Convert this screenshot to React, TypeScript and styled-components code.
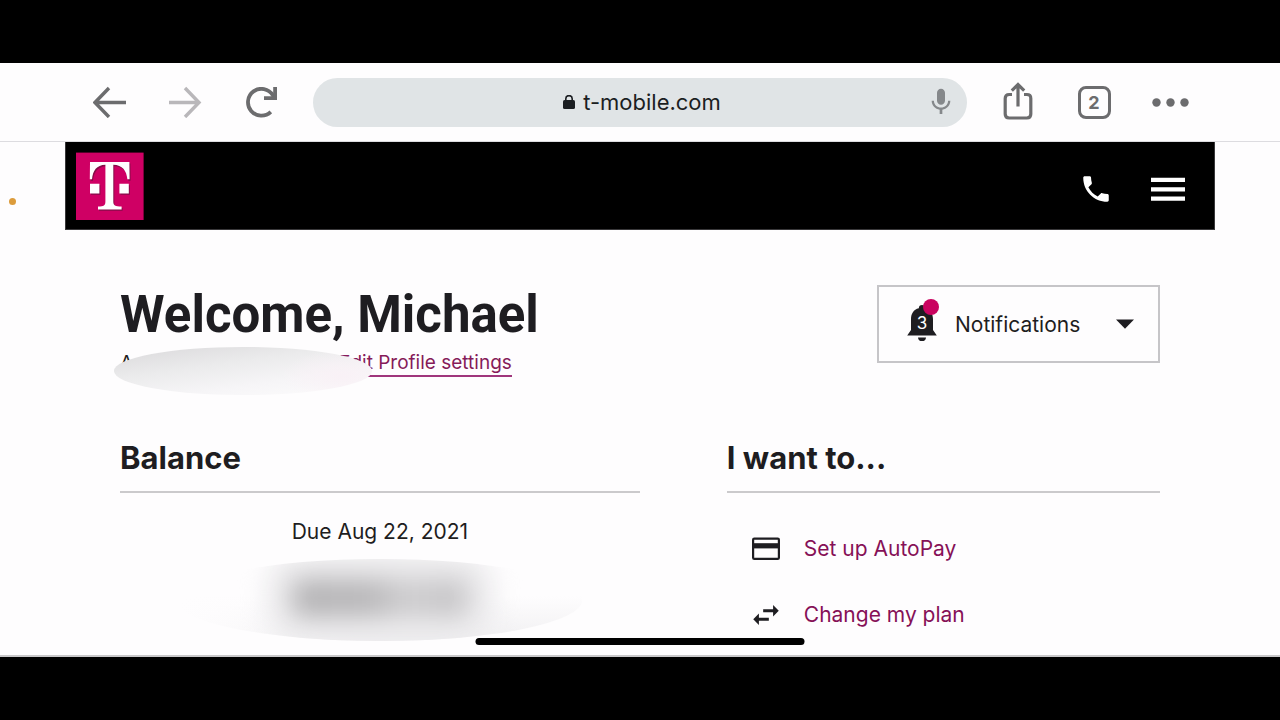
import React from "react";
import styled, { createGlobalStyle } from "styled-components";
import { MdMic, MdSwapHoriz } from "react-icons/md";

const GlobalStyle = createGlobalStyle`
  *, *::before, *::after { box-sizing: border-box; }
  body {
    margin: 0;
    background: #000;
    color: #1e1d21;
    font-family: Inter, "Liberation Sans", sans-serif;
    font-size: 21px;
  }
  h1, h2, p, ul { margin: 0; padding: 0; }
  button { font: inherit; color: inherit; cursor: pointer; }
  svg { display: block; }
`;

const Device = styled.div`
  min-height: 100vh;
  padding: 63px 0;
  display: flex;
  flex-direction: column;
`;

const Screen = styled.div`
  position: relative;
  flex: 1;
  background: #fefdfe;
  border-bottom: 2px solid #c9c8ca;
`;

const Toolbar = styled.nav`
  display: flex;
  align-items: center;
  height: 79px;
  padding: 0 72px;
  border-bottom: 1px solid #dddce0;
`;

const ToolButton = styled.button<{ $muted?: boolean }>`
  display: flex;
  align-items: center;
  justify-content: center;
  width: 76px;
  height: 48px;
  padding: 0;
  border: 0;
  background: none;
  color: ${(p) => (p.$muted ? "#b9b7ba" : "#6c6c6e")};
`;

const TabCount = styled.span`
  display: flex;
  align-items: center;
  justify-content: center;
  width: 33px;
  height: 33px;
  border: 3px solid currentColor;
  border-radius: 8px;
  font-size: 18px;
  font-weight: 700;
`;

const AddressBar = styled.div`
  flex: 1;
  display: grid;
  grid-template-columns: 1fr auto 1fr;
  align-items: center;
  height: 49px;
  margin: 0 13px;
  padding: 0 10px;
  border-radius: 25px;
  background: #e0e4e6;
`;

const Address = styled.button`
  grid-column: 2;
  display: flex;
  align-items: center;
  gap: 8px;
  padding: 0 0 0 4px;
  border: 0;
  background: none;
  color: #1b1e22;
  font-size: 22px;
  line-height: 28px;
`;

const MicButton = styled.button`
  justify-self: end;
  padding: 0;
  border: 0;
  background: none;
  color: #85888b;
`;

const SiteHeader = styled.header`
  display: flex;
  align-items: center;
  justify-content: space-between;
  height: 88px;
  margin: 0 65px;
  padding: 0 29px 0 10px;
  border: 1px solid #39383a;
  border-top: 0;
  background: #000;
`;

const HeaderActions = styled.div`
  display: flex;
  align-items: center;
  gap: 38px;
  padding-top: 6px;
`;

const HeaderButton = styled.button`
  padding: 0;
  border: 0;
  background: none;
  color: #fff;
`;

const Main = styled.main`
  padding: 55px 120px 14px;
`;

const Intro = styled.section`
  display: flex;
  align-items: flex-start;
  justify-content: space-between;
`;

const Title = styled.h1`
  font-family: Roboto, "Liberation Sans", sans-serif;
  font-size: 51px;
  line-height: 60px;
  font-weight: 700;
`;

const ProfileRow = styled.div`
  position: relative;
  display: flex;
  margin-top: 6px;
  font-size: 19px;
  line-height: 24px;
`;

const AccountLabel = styled.span`
  width: 219px;
`;

const ProfileLink = styled.a`
  border-bottom: 2px solid #a0367c;
  color: #861b59;
  text-decoration: none;
`;

const AccountMask = styled.div`
  position: absolute;
  left: -6px;
  top: -4px;
  width: 258px;
  height: 48px;
  border-radius: 50%;
  background:
    radial-gradient(ellipse 60px 26px at 88% 60%, #f9f1f6 0%, #f9f1f600 100%),
    linear-gradient(172deg, #dddcde 8%, #ebebec 38%, #f6f5f7 68%, #fcfbfc 95%);
`;

const Notifications = styled.button`
  display: flex;
  align-items: center;
  width: 283px;
  height: 78px;
  padding: 0 24px 0 28px;
  border: 2px solid #c6c5c8;
  background: #fefdfe;
`;

const NotificationsLabel = styled.span`
  flex: 1;
  margin-left: 14px;
  text-align: left;
`;

const BellIcon = styled.span`
  position: relative;
  width: 34px;
  height: 50px;
`;

const BellCount = styled.span`
  position: absolute;
  top: 14px;
  left: 0;
  width: 30px;
  color: #fff;
  font-size: 17px;
  line-height: 20px;
  text-align: center;
`;

const BellDot = styled.span`
  position: absolute;
  top: 0;
  left: 16px;
  width: 16px;
  height: 16px;
  border-radius: 50%;
  background: #c9035f;
`;

const Columns = styled.div`
  display: grid;
  grid-template-columns: 6fr 5fr;
  gap: 87px;
  margin-top: 61px;
`;

const SectionTitle = styled.h2`
  padding-bottom: 13px;
  border-bottom: 2px solid #cbcacc;
  font-size: 31px;
  line-height: 40px;
  font-weight: 700;
`;

const DueDate = styled.p`
  margin-top: 25px;
  line-height: 28px;
  text-align: center;
`;

const AmountMask = styled.div`
  display: flex;
  align-items: flex-start;
  justify-content: center;
  width: 404px;
  height: 82px;
  margin: 13px auto 0;
  padding-top: 20px;
  overflow: hidden;
  border-radius: 50%;
  background:
    linear-gradient(90deg, #fefdfe 0%, #fefdfe00 45%),
    linear-gradient(180deg, #fefdfe 45%, #f1f0f2 100%);
`;

const AmountBlur = styled.div`
  width: 176px;
  height: 38px;
  border-radius: 12px;
  background: linear-gradient(90deg, #b6b5b7 0%, #b9b8ba 45%, #cfced0 64%, #c6c5c7 100%);
  box-shadow: 0 0 0 26px #ebeaec;
  filter: blur(12px);
`;

const ActionList = styled.ul`
  display: flex;
  flex-direction: column;
  gap: 32px;
  padding: 39px 0 0 22px;
  list-style: none;
`;

const ActionLink = styled.a`
  display: flex;
  align-items: center;
  gap: 21px;
  color: #861157;
  line-height: 34px;
  text-decoration: none;

  svg { color: #1e1d21; }
`;

const HomeIndicator = styled.div`
  position: absolute;
  left: 50%;
  bottom: 10px;
  width: 329px;
  height: 7px;
  border-radius: 4px;
  background: #000;
  transform: translateX(-50%);
`;

const RecordingDot = styled.div`
  position: absolute;
  left: 9px;
  top: 135px;
  width: 7px;
  height: 7px;
  border-radius: 50%;
  background: #dc9c3c;
`;

const ArrowIcon = ({ forward = false }: { forward?: boolean }) => (
  <svg width="34" height="32" viewBox="0 0 34 32" fill="none" stroke="currentColor" strokeWidth="3.4" aria-hidden="true">
    {forward ? <path d="M0 16.5H30M16 2L30 16.5L16 31" /> : <path d="M33 16.5H3M16 2L2 16.5L16 31" />}
  </svg>
);

const ReloadIcon = () => (
  <svg width="33" height="31" viewBox="0 0 33 31" fill="none" stroke="currentColor" strokeWidth="3.8" aria-hidden="true">
    <path d="M24.8 24.8A13.4 13.4 0 1 1 26.8 8.2L29 11" />
    <path d="M29.1 0V11.2H18" />
  </svg>
);

const LockIcon = () => (
  <svg width="12" height="15" viewBox="0 0 12 15" aria-hidden="true">
    <rect x="0" y="5" width="12" height="9" rx="1.6" fill="currentColor" />
    <path d="M2.8 7V3.8A3.2 3.2 0 0 1 9.2 3.8V7" fill="none" stroke="currentColor" strokeWidth="1.6" />
  </svg>
);

const ShareIcon = () => (
  <svg width="30" height="40" viewBox="0 0 30 40" fill="none" stroke="currentColor" strokeWidth="3.2" aria-hidden="true">
    <path d="M9 12.5H6.2C3.4 12.5 2.2 13.8 2.2 16.5V32C2.2 34.7 3.4 36 6.2 36H23.8C26.6 36 27.8 34.7 27.8 32V16.5C27.8 13.8 26.6 12.5 23.8 12.5H21" />
    <path d="M15 24.5V3M8.8 8.6L15 2.6L21.2 8.6" />
  </svg>
);

const MoreIcon = () => (
  <svg width="37" height="9" viewBox="0 0 37 9" fill="currentColor" aria-hidden="true">
    <circle cx="4.5" cy="4.5" r="4.2" />
    <circle cx="18.5" cy="4.5" r="4.2" />
    <circle cx="32.5" cy="4.5" r="4.2" />
  </svg>
);

const PhoneIcon = () => (
  <svg width="34" height="34" viewBox="0 0 24 24" fill="currentColor" aria-hidden="true">
    <path d="M6.62 10.79c1.44 2.83 3.76 5.14 6.59 6.59l2.2-2.2c.27-.27.67-.36 1.02-.24 1.12.37 2.33.57 3.57.57.55 0 1 .45 1 1V20c0 .55-.45 1-1 1-9.39 0-17-7.61-17-17 0-.55.45-1 1-1h3.5c.55 0 1 .45 1 1 0 1.25.2 2.45.57 3.57.11.35.03.74-.25 1.02l-2.2 2.2z" />
  </svg>
);

const MenuIcon = () => (
  <svg width="34" height="24" viewBox="0 0 34 24" fill="currentColor" aria-hidden="true">
    <path d="M0 0.8H34V5H0ZM0 10.2H34V14.4H0ZM0 19.6H34V23.8H0Z" />
  </svg>
);

const CardIcon = () => (
  <svg width="34" height="34" viewBox="0 0 34 34" aria-hidden="true">
    <rect x="4.1" y="6.6" width="25.8" height="20.3" rx="1.2" fill="none" stroke="currentColor" strokeWidth="2.2" />
    <rect x="4" y="11.2" width="26" height="5.2" fill="currentColor" />
  </svg>
);

const SwapIcon = () => <MdSwapHoriz size={34} aria-hidden="true" />;

const T_BODY =
  "M14 10H53.4L53.6 27.3H51.4C50.4 18.6 46.5 13 37.3 12.8V49.5C37.3 53.4 39 54.3 45.6 54.6V57.4H22V54.6C28 54.3 29.4 53.4 29.4 49.5V12.8C20.5 13 16.9 18.6 16 27.3H13.8Z";
const T_SQUARES = "M14 31.8H23.4V41.4H14ZM43.4 31.8H52.8V41.4H43.4Z";

const BrandLogo = () => (
  <svg width="68" height="68" viewBox="0 0 68 68" role="img" aria-label="T-Mobile">
    <rect y="0.6" width="67.6" height="67.4" fill="#cf0064" />
    <path d={T_BODY + T_SQUARES} fill="#850d48" transform="translate(1 1.4)" />
    <path d={T_BODY + T_SQUARES} fill="#fff" />
  </svg>
);

const BellShape = () => (
  <svg width="30" height="44" viewBox="0 0 30 44" fill="#1e1d21" aria-hidden="true">
    <path d="M15 6C17 6 18 7.2 18.2 9.2C23.5 10.5 26 14.8 26 20V31L29.8 36.6H0.2L4 31V20C4 14.8 6.5 10.5 11.8 9.2C12 7.2 13 6 15 6Z" />
    <path d="M11 38.4H19C19 40.8 17.4 42 15 42S11 40.8 11 38.4Z" />
  </svg>
);

const CaretIcon = () => (
  <svg width="18" height="10" viewBox="0 0 18 10" fill="#1e1d21" aria-hidden="true">
    <path d="M0 0.6H18L9 9.8Z" />
  </svg>
);

const actions = [
  { label: "Set up AutoPay", Icon: CardIcon },
  { label: "Change my plan", Icon: SwapIcon },
];

export default function App() {
  return (
    <Device>
      <GlobalStyle />
      <Screen>
        <Toolbar aria-label="Browser">
          <ToolButton aria-label="Back"><ArrowIcon /></ToolButton>
          <ToolButton aria-label="Forward" $muted><ArrowIcon forward /></ToolButton>
          <ToolButton aria-label="Reload"><ReloadIcon /></ToolButton>
          <AddressBar>
            <Address>
              <LockIcon />
              t-mobile.com
            </Address>
            <MicButton aria-label="Voice search"><MdMic size={32} /></MicButton>
          </AddressBar>
          <ToolButton aria-label="Share"><ShareIcon /></ToolButton>
          <ToolButton aria-label="Open tabs"><TabCount>2</TabCount></ToolButton>
          <ToolButton aria-label="More"><MoreIcon /></ToolButton>
        </Toolbar>

        <SiteHeader>
          <BrandLogo />
          <HeaderActions>
            <HeaderButton aria-label="Call us"><PhoneIcon /></HeaderButton>
            <HeaderButton aria-label="Menu"><MenuIcon /></HeaderButton>
          </HeaderActions>
        </SiteHeader>

        <Main>
          <Intro>
            <div>
              <Title>Welcome, Michael</Title>
              <ProfileRow>
                <AccountLabel>A</AccountLabel>
                <ProfileLink href="#profile">Edit Profile settings</ProfileLink>
                <AccountMask />
              </ProfileRow>
            </div>
            <Notifications>
              <BellIcon>
                <BellShape />
                <BellCount>3</BellCount>
                <BellDot />
              </BellIcon>
              <NotificationsLabel>Notifications</NotificationsLabel>
              <CaretIcon />
            </Notifications>
          </Intro>

          <Columns>
            <section>
              <SectionTitle>Balance</SectionTitle>
              <DueDate>Due Aug 22, 2021</DueDate>
              <AmountMask><AmountBlur /></AmountMask>
            </section>
            <section>
              <SectionTitle>I want to...</SectionTitle>
              <ActionList>
                {actions.map(({ label, Icon }) => (
                  <li key={label}>
                    <ActionLink href="#account">
                      <Icon />
                      {label}
                    </ActionLink>
                  </li>
                ))}
              </ActionList>
            </section>
          </Columns>
        </Main>

        <HomeIndicator />
        <RecordingDot />
      </Screen>
    </Device>
  );
}
